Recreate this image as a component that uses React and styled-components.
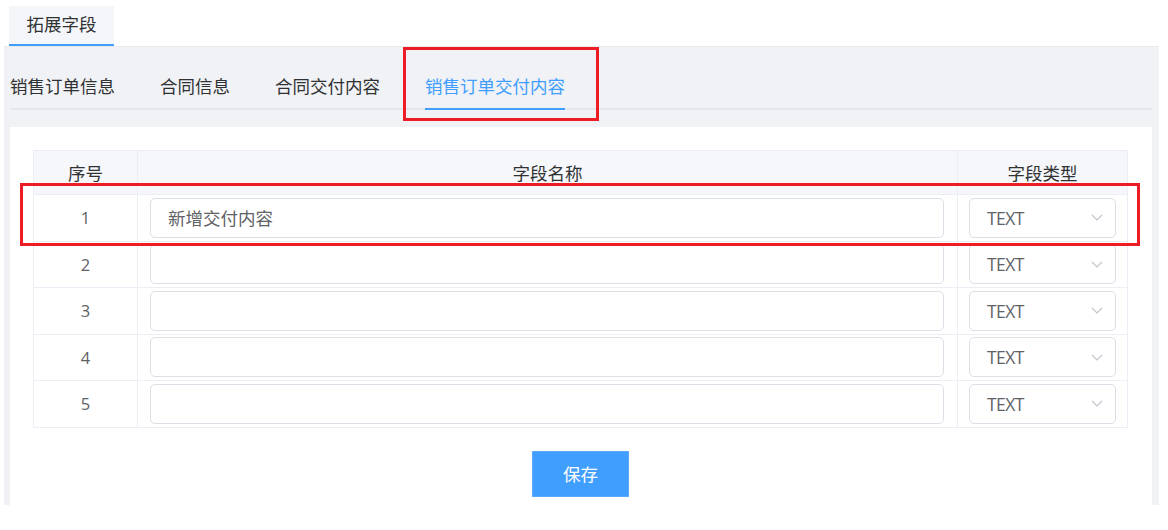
import React from "react";
import styled, { createGlobalStyle } from "styled-components";

const GlobalStyle = createGlobalStyle`
  body {
    margin: 0;
    background: #fff;
    font-family: "Noto Sans CJK SC", "Noto Sans", sans-serif;
    color: #303133;
  }
`;

const Page = styled.div`
  position: relative;
  width: 1168px;
  height: 530px;
  overflow: hidden;
`;

const TopTabs = styled.div`
  display: flex;
  height: 46px;
  padding-left: 9px;
  box-sizing: border-box;
`;

const TopTab = styled.div`
  margin-top: 6px;
  width: 105px;
  height: 40px;
  box-sizing: border-box;
  background: #f4f6fa;
  border-bottom: 2px solid #409eff;
  font-size: 17.5px;
  line-height: 36px;
  text-align: center;
  color: #303133;
`;

const Panel = styled.div`
  margin: 0 9px 0 4px;
  padding: 0 7px 0 6px;
  background: #f0f2f5;
  border-top: 1px solid #e8eaee;
  height: 459px;
  box-sizing: border-box;
  overflow: hidden;
`;

const SubNav = styled.div`
  display: flex;
  margin-top: 17px;
  border-bottom: 2px solid #e4e7ed;
`;

const SubTab = styled.div`
  height: 46px;
  line-height: 44px;
  margin: 0 22.5px -2px;
  box-sizing: border-box;
  font-size: 17.5px;
  color: ${(p) => (p.active ? "#409eff" : "#303133")};
  border-bottom: 2px solid ${(p) => (p.active ? "#409eff" : "transparent")};
  &:first-child {
    margin-left: 0;
  }
`;

const Card = styled.div`
  margin-top: 17px;
  background: #fff;
  padding: 23px 24px 12px 23px;
`;

const Table = styled.table`
  width: 100%;
  border-collapse: collapse;
  table-layout: fixed;
  border: 1px solid #ebeef5;
  font-size: 17.5px;
`;

const Th = styled.th`
  height: 43px;
  background: #f5f7fa;
  border: 1px solid #ebeef5;
  font-weight: normal;
  color: #303133;
  padding: 0;
  width: ${(p) => p.w || "auto"};
`;

const Td = styled.td`
  height: 45.5px;
  border: 1px solid #ebeef5;
  padding: 0 ${(p) => p.pr || "12px"} 0 ${(p) => p.pl || "12px"};
  text-align: ${(p) => (p.center ? "center" : "left")};
  color: #606266;
  font-family: "Open Sans", "Noto Sans CJK SC", sans-serif;
  font-size: 16.5px;
`;

const Input = styled.div`
  height: 40px;
  box-sizing: border-box;
  border: 1px solid #dcdfe6;
  border-radius: 5px;
  padding: 0 17px;
  line-height: 38px;
  color: #606266;
  font-size: 17.5px;
  font-family: "Noto Sans CJK SC", sans-serif;
`;

const Select = styled.div`
  height: 40px;
  box-sizing: border-box;
  border: 1px solid #dcdfe6;
  border-radius: 5px;
  padding: 0 12px 0 17px;
  display: flex;
  align-items: center;
  justify-content: space-between;
  color: #606266;
  font-size: 17.5px;
  font-family: "Open Sans", sans-serif;
  letter-spacing: -0.6px;
`;

const Footer = styled.div`
  display: flex;
  justify-content: center;
  padding-top: 23px;
`;

const SaveButton = styled.button`
  width: 97px;
  height: 46px;
  border: 1px solid #5aabff;
  background: #409eff;
  color: #fff;
  font-size: 17.5px;
  font-family: "Noto Sans CJK SC", sans-serif;
  border-radius: 0;
  padding: 0;
`;

const Mark = styled.div`
  position: absolute;
  box-sizing: border-box;
  border: 3px solid #ee1c25;
  pointer-events: none;
`;

const Chevron = () => (
  <svg width="12" height="7" viewBox="0 0 12 7" fill="none">
    <path d="M1 1l5 5 5-5" stroke="#c0c4cc" strokeWidth="1.2" />
  </svg>
);

const subTabs = ["销售订单信息", "合同信息", "合同交付内容", "销售订单交付内容"];
const rows = [
  { no: 1, name: "新增交付内容" },
  { no: 2, name: "" },
  { no: 3, name: "" },
  { no: 4, name: "" },
  { no: 5, name: "" },
];

export default function App() {
  return (
    <Page>
      <GlobalStyle />
      <TopTabs>
        <TopTab>拓展字段</TopTab>
      </TopTabs>
      <Panel>
        <SubNav>
          {subTabs.map((t, i) => (
            <SubTab key={t} active={i === 3}>
              {t}
            </SubTab>
          ))}
        </SubNav>
        <Card>
          <Table>
            <thead>
              <tr>
                <Th w="103px">序号</Th>
                <Th w="819px">字段名称</Th>
                <Th>字段类型</Th>
              </tr>
            </thead>
            <tbody>
              {rows.map((r) => (
                <tr key={r.no}>
                  <Td center>{r.no}</Td>
                  <Td pl="12px" pr="13px">
                    <Input>{r.name}</Input>
                  </Td>
                  <Td pl="11px" pr="11px">
                    <Select>
                      <span>TEXT</span>
                      <Chevron />
                    </Select>
                  </Td>
                </tr>
              ))}
            </tbody>
          </Table>
          <Footer>
            <SaveButton>保存</SaveButton>
          </Footer>
        </Card>
      </Panel>
      <Mark style={{ left: 403, top: 47, width: 196, height: 74 }} />
      <Mark style={{ left: 20, top: 183, width: 1120, height: 63 }} />
    </Page>
  );
}
